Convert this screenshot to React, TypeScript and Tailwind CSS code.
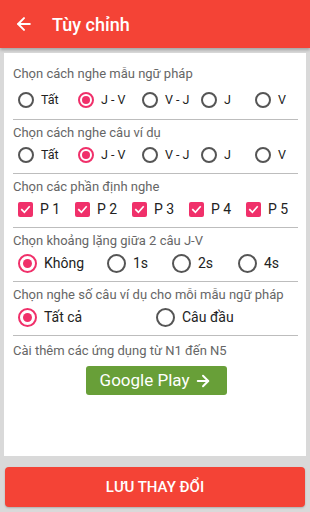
import { FC } from "react";
import { ArrowLeft, ArrowRight } from "lucide-react";

interface RadioProps {
  label: string;
  checked?: boolean;
  big?: boolean;
  className?: string;
}

const Radio: FC<RadioProps> = ({ label, checked, big, className }) => {
  return (
    <div className={`flex items-center shrink-0 ${big ? "gap-[7px]" : "gap-[7px]"} ${className ?? ""}`}>
      <div
        className={`rounded-full flex items-center justify-center border-2 ${
          big ? "w-[19px] h-[19px]" : "w-[16px] h-[16px]"
        } ${checked ? "border-[#f0306a]" : "border-[#555555]"}`}
      >
        {checked && (
          <div
            className={`rounded-full bg-[#f0306a] ${big ? "w-[9px] h-[9px]" : "w-[8px] h-[8px]"}`}
          />
        )}
      </div>
      <span className={`text-[#222] ${big ? "text-[14px]" : "text-[12.5px]"}`}>{label}</span>
    </div>
  );
};

const Check: FC<{ label: string }> = ({ label }) => (
  <div className="flex items-center gap-[7px] w-[57px] shrink-0">
    <div className="w-[15px] h-[15px] rounded-[2px] bg-[#f0306a] flex items-center justify-center">
      <svg width="11" height="11" viewBox="0 0 12 12" fill="none">
        <path d="M2 6.2 L4.8 9 L10 3.2" stroke="white" strokeWidth="1.8" strokeLinecap="square" />
      </svg>
    </div>
    <span className="text-[14px] text-[#222]">{label}</span>
  </div>
);

const Section: FC<{ title: string; first?: boolean; children: React.ReactNode }> = ({
  title,
  first,
  children,
}) => (
  <div className={`border-b border-[#bdbdbd] ${first ? "pt-[13px] pb-[7px]" : "pt-[5px] pb-[6px]"}`}>
    <div className="text-[13px] leading-[16px] text-[#666]">{title}</div>
    <div className={`${first ? "mt-[6px]" : "mt-[2px]"} h-[24px] flex items-center pl-[5px]`}>
      {children}
    </div>
  </div>
);

export default function App() {
  return (
    <div
      className="w-[310px] h-[512px] bg-[#d9d9d9] flex flex-col overflow-hidden"
      style={{ fontFamily: "Roboto, 'Noto Sans', sans-serif" }}
    >
      <div className="h-[48px] bg-[#f44336] flex items-center shadow-[0_2px_3px_rgba(0,0,0,0.25)] z-10 shrink-0">
        <ArrowLeft className="ml-[14px] text-white" size={20} strokeWidth={2.4} />
        <div className="ml-[18px] text-white text-[18px] font-medium">Tùy chỉnh</div>
      </div>

      <div className="mx-[4px] mt-[5px] h-[403px] bg-white pl-[9px] pr-[8px] shrink-0">
        <Section title="Chọn cách nghe mẫu ngữ pháp" first>
          <Radio label="Tất" className="w-[60px]" />
          <Radio label="J - V" checked className="w-[64px]" />
          <Radio label="V - J" className="w-[59px]" />
          <Radio label="J" className="w-[54px]" />
          <Radio label="V" />
        </Section>
        <Section title="Chọn cách nghe câu ví dụ">
          <Radio label="Tất" className="w-[60px]" />
          <Radio label="J - V" checked className="w-[64px]" />
          <Radio label="V - J" className="w-[59px]" />
          <Radio label="J" className="w-[54px]" />
          <Radio label="V" />
        </Section>
        <Section title="Chọn các phần định nghe">
          <Check label="P 1" />
          <Check label="P 2" />
          <Check label="P 3" />
          <Check label="P 4" />
          <Check label="P 5" />
        </Section>
        <Section title="Chọn khoảng lặng giữa 2 câu J-V">
          <Radio label="Không" checked big className="w-[89px]" />
          <Radio label="1s" big className="w-[65px]" />
          <Radio label="2s" big className="w-[66px]" />
          <Radio label="4s" big />
        </Section>
        <Section title="Chọn nghe số câu ví dụ cho mỗi mẫu ngữ pháp">
          <Radio label="Tất cả" checked big className="w-[138px]" />
          <Radio label="Câu đầu" big />
        </Section>
        <div className="pt-[7px]">
          <div className="text-[13px] leading-[16px] text-[#666]">Cài thêm các ứng dụng từ N1 đến N5</div>
          <div className="mt-[7px] flex justify-center">
            <button className="ml-[1px] w-[141px] h-[29px] rounded-[3px] bg-[#689f38] text-white text-[17px] flex items-center justify-center gap-[5px]">
              Google Play
              <ArrowRight size={18} strokeWidth={2.6} />
            </button>
          </div>
        </div>
      </div>

      <div className="mx-[5px] mt-[11px] h-[40px] rounded-[4px] bg-[#f44336] flex items-center justify-center shadow-[0_1px_2px_rgba(0,0,0,0.2)]">
        <span className="text-white text-[15px] font-medium">LƯU THAY ĐỔI</span>
      </div>
    </div>
  );
}
